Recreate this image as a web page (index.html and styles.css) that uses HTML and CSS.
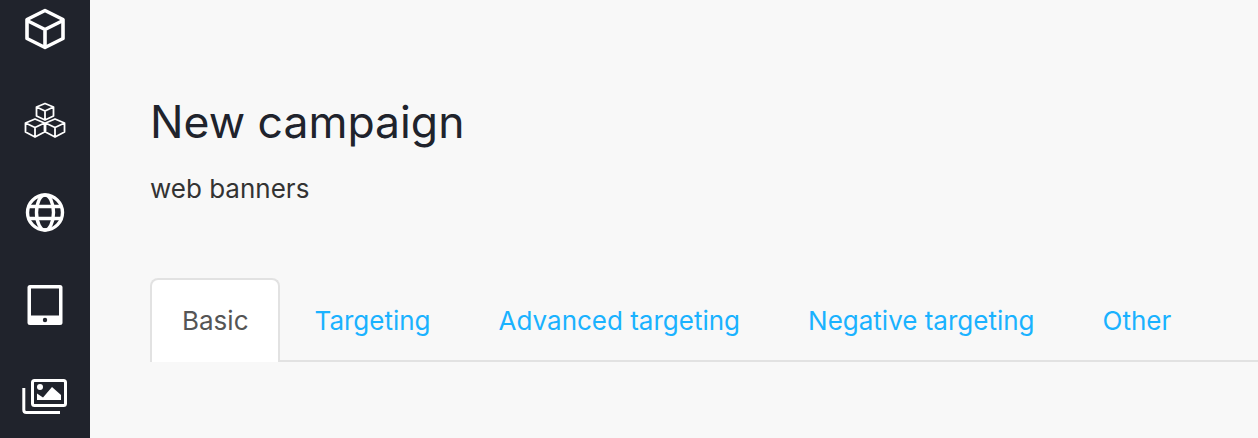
FILE: index.html
```html
<!DOCTYPE html>
<html lang="en">
<head>
    <meta charset="UTF-8">
    <title>New campaign</title>
    <link rel="stylesheet" href="styles.css">
</head>
<body>
    <nav class="sidebar">
        <a class="side-item" href="#">
            <svg width="46" height="46" viewBox="0 0 46 46" fill="none" stroke="#fff" stroke-width="3.600" stroke-linejoin="round">
                <path d="M23 4.500 L41 13.500 V32.500 L23 41.500 L5 32.500 V13.500 Z"/>
                <path d="M5 14.500 L23 23.500 L41 14.500 M23 23.500 V41.500"/>
            </svg>
        </a>
        <a class="side-item" href="#">
            <svg width="46" height="46" viewBox="0 0 46 46" fill="none" stroke="#fff" stroke-width="1.800" stroke-linejoin="round">
                <path d="M23 5.500 L31.500 9 V18 L23 22 L14.500 18 V9 Z M14.500 9 L23 13 L31.500 9 M23 13 V22"/>
                <path d="M13 21 L22.500 25 V34 L13 39 L3.500 34 V25 Z M3.500 25 L13 29.500 L22.500 25 M13 29.500 V39"/>
                <path d="M33 21 L42.500 25 V34 L33 39 L23.500 34 V25 Z M23.500 25 L33 29.500 L42.500 25 M33 29.500 V39"/>
            </svg>
        </a>
        <a class="side-item" href="#">
            <svg width="46" height="46" viewBox="0 0 46 46" fill="none" stroke="#fff" stroke-width="3.400">
                <circle cx="23" cy="22.500" r="17.500"/>
                <ellipse cx="23" cy="22.500" rx="8.500" ry="17.500"/>
                <path d="M7 16.500 H39 M7 28.500 H39"/>
            </svg>
        </a>
        <a class="side-item" href="#">
            <svg width="46" height="46" viewBox="0 0 46 46">
                <rect x="5.500" y="3" width="35" height="40" rx="2.500" fill="#fff"/>
                <rect x="9" y="6.500" width="28" height="27" fill="#20232c"/>
                <circle cx="23" cy="38" r="2.200" fill="#20232c"/>
            </svg>
        </a>
        <a class="side-item" href="#">
            <svg width="46" height="46" viewBox="0 0 46 46" fill="none" stroke="#fff" stroke-width="3">
                <rect x="10.500" y="6.500" width="33" height="25" rx="2"/>
                <path d="M1.800 14 V36 Q1.800 38.500 4.300 38.500 H38"/>
                <circle cx="18" cy="13" r="3" fill="#fff" stroke="none"/>
                <path d="M15 26 V19.500 L21 23.500 L30 13 L39 21 V26 Z" fill="#fff" stroke="none"/>
            </svg>
        </a>
    </nav>

    <main class="content">
        <h1>New campaign</h1>
        <p class="subtitle">web banners</p>
        <div class="tabs">
            <a class="tab active" href="#">Basic</a>
            <a class="tab" href="#">Targeting</a>
            <a class="tab" href="#">Advanced targeting</a>
            <a class="tab" href="#">Negative targeting</a>
            <a class="tab" href="#">Other</a>
        </div>
    </main>
</body>
</html>
```

FILE: styles.css
```css
html, body {
    height: 100%;
}

body {
    display: flex;
    margin: 0;
    overflow: hidden;
    font-family: Inter, Lato, sans-serif;
    background-color: #f8f8f8;
}

.sidebar {
    flex: 0 0 90px;
    height: 100%;
    overflow: hidden;
    background-color: #20232c;
}

.side-item {
    display: flex;
    align-items: center;
    justify-content: center;
    height: 92px;
}

.side-item:first-child {
    margin-top: -17px;
}

.content {
    flex: 1;
    padding: 90px 0 0 60px;
}

h1 {
    margin: 0;
    font-size: 44.500px;
    font-weight: 400;
    line-height: 64px;
    color: #20232c;
}

.subtitle {
    margin: 19px 0 0;
    font-size: 26px;
    line-height: 32px;
    color: #333;
}

.tabs {
    display: flex;
    gap: 4px;
    margin-top: 73px;
    border-bottom: 2px solid #e2e2e2;
}

.tab {
    margin-bottom: -2px;
    padding: 25px 30px;
    border: 2px solid transparent;
    border-bottom: 0;
    border-radius: 8px 8px 0 0;
    font-size: 26px;
    line-height: 32px;
    color: #1ab2ff;
    text-decoration: none;
}

.tab.active {
    margin-right: -1px;
    padding-right: 29px;
    border-color: #e2e2e2;
    background-color: #fff;
    color: #555;
}
```
